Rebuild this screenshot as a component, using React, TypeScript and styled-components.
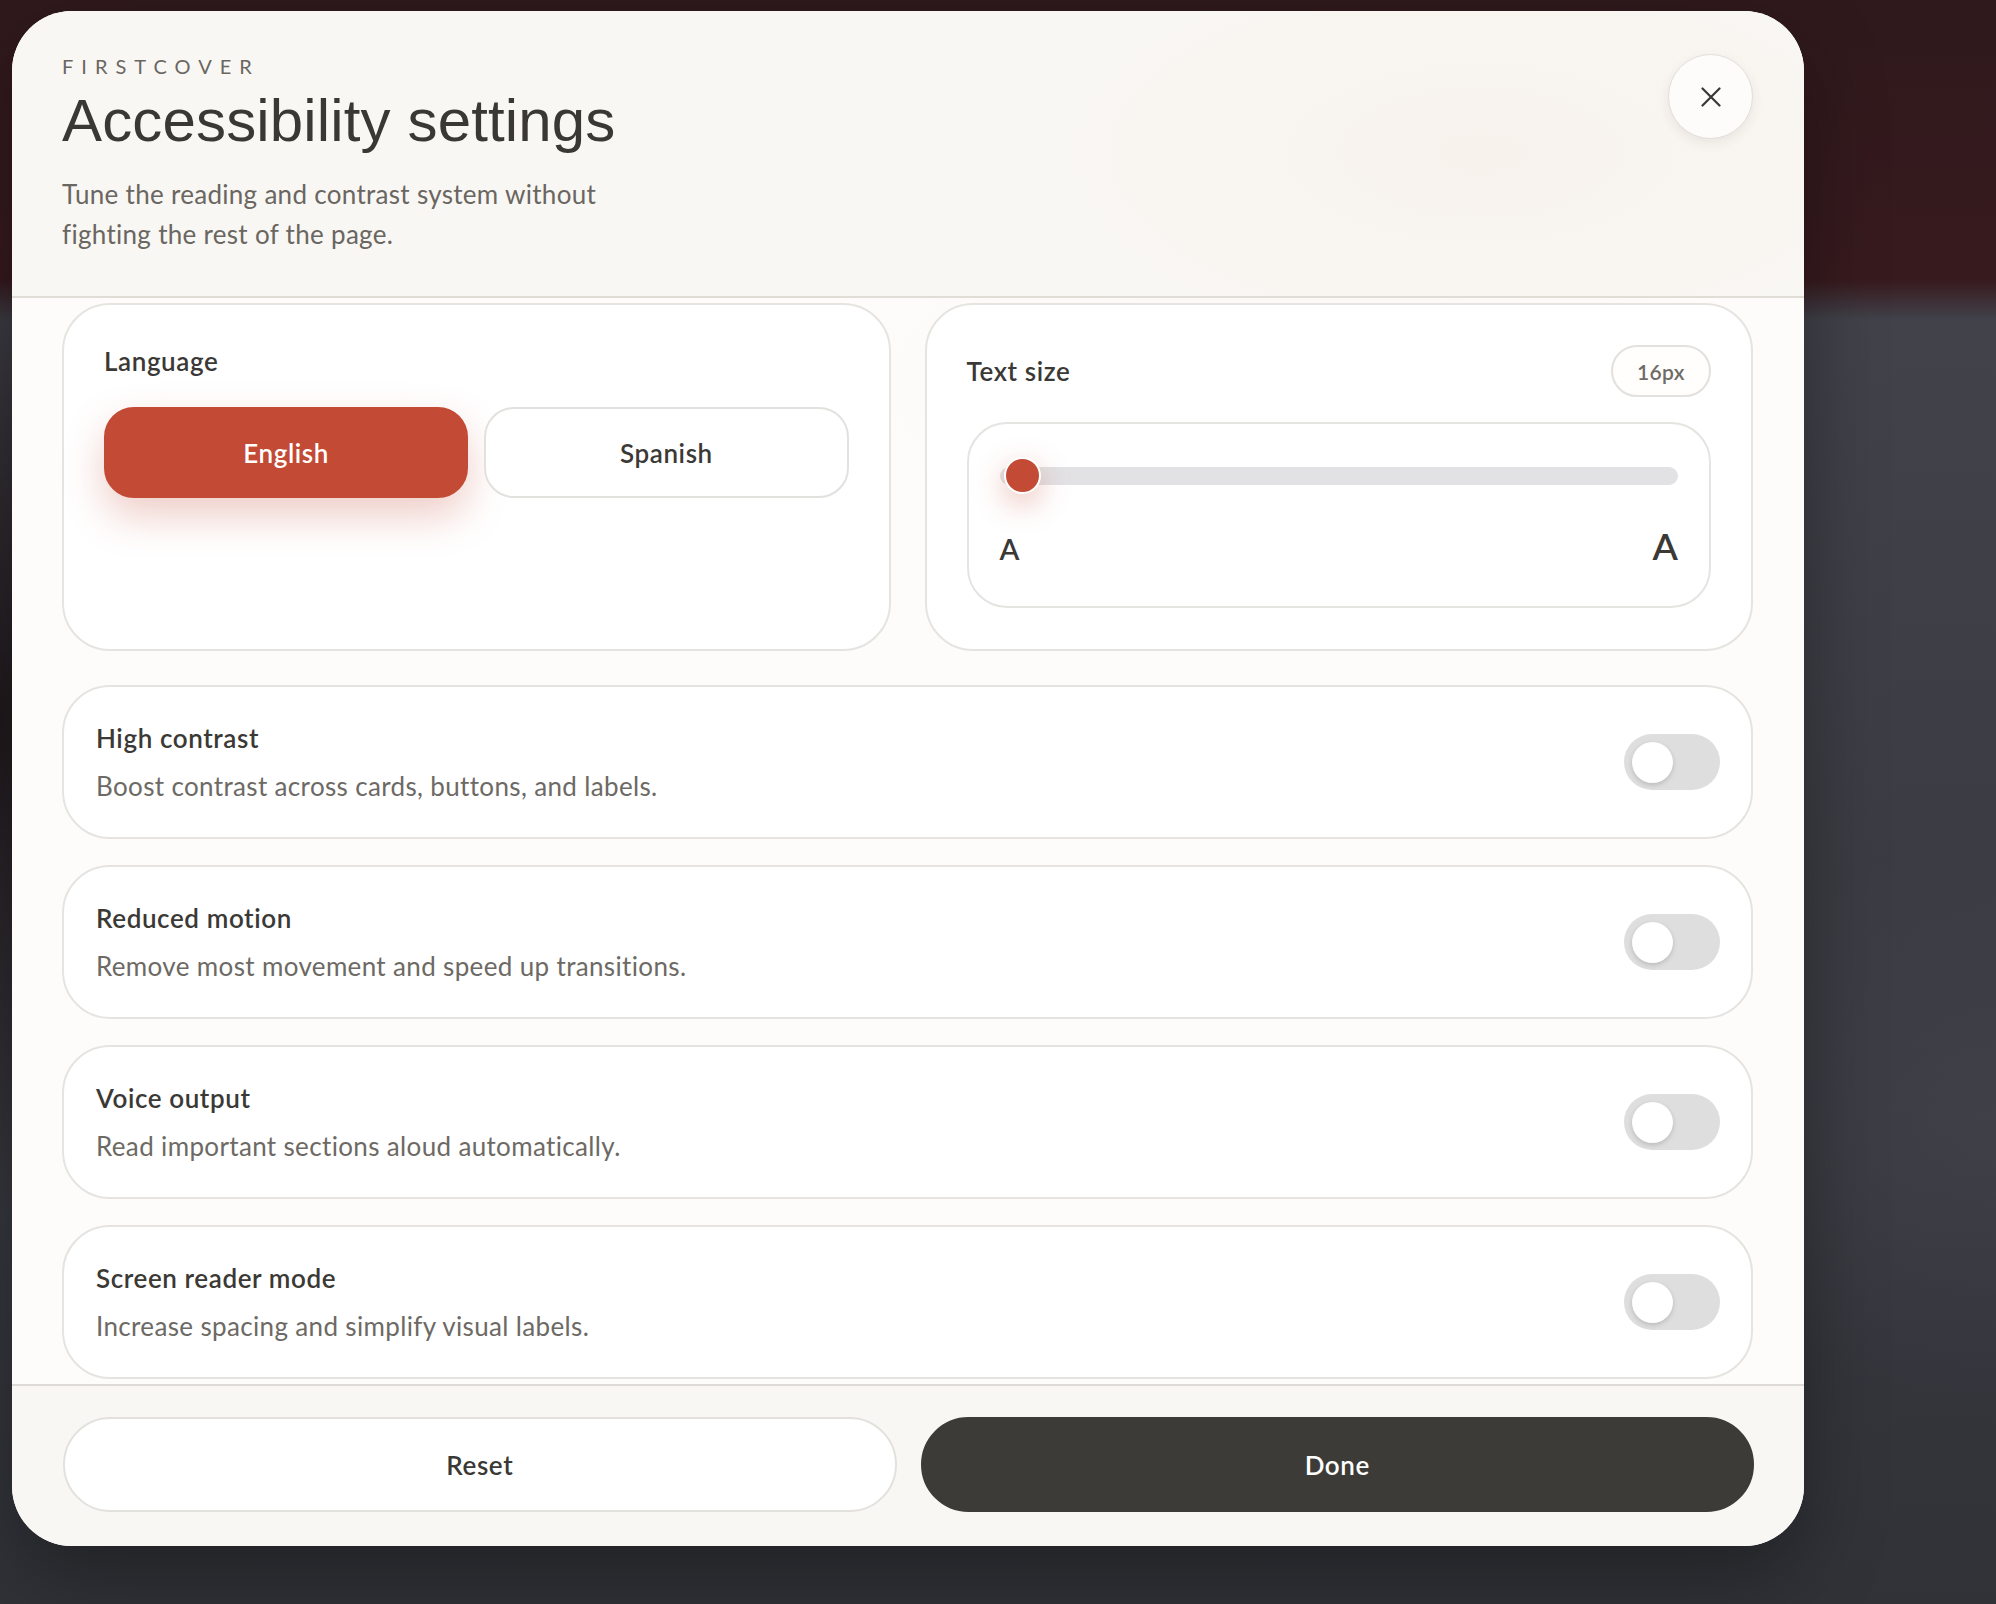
import React from "react";
import styled, { createGlobalStyle } from "styled-components";

const Global = createGlobalStyle`
  html, body { margin: 0; padding: 0; }
  body {
    font-family: Lato, "Liberation Sans", sans-serif;
    background: #35363c;
    -webkit-font-smoothing: antialiased;
  }
  * { box-sizing: border-box; }
  button { font-family: inherit; }
`;

const Page = styled.div`
  min-height: 100vh;
  padding: 11px 0 0 12px;
  background:
    radial-gradient(ellipse 260px 700px at 0% 45%, rgba(22, 12, 14, 0.75), transparent 70%),
    radial-gradient(ellipse 500px 400px at 100% 70%, rgba(70, 71, 80, 0.5), transparent 70%),
    linear-gradient(180deg, #2f191c 0px, #371a1e 280px, #41424a 320px, #3b3c43 900px, #313238 1604px);
`;

const Modal = styled.div`
  width: 1792px;
  border-radius: 60px;
  overflow: hidden;
  background: #fdfcfa;
  box-shadow: 0 30px 80px rgba(0, 0, 0, 0.35);
  display: flex;
  flex-direction: column;
`;

const Header = styled.header`
  display: flex;
  justify-content: space-between;
  align-items: flex-start;
  padding: 43px 51px 42px 50px;
  background:
    radial-gradient(ellipse 520px 240px at 82% 50%, rgba(245, 232, 225, 0.35), transparent 80%),
    #f9f7f3;
  border-bottom: 2px solid #e0dcd6;
`;

const HeaderText = styled.div`
  display: flex;
  flex-direction: column;
`;

const Eyebrow = styled.div`
  font-size: 20px;
  line-height: 24px;
  letter-spacing: 0.4em;
  color: #6a6661;
  text-transform: uppercase;
`;

const Title = styled.h1`
  margin: 11px 0 0;
  font-family: "Liberation Sans", Arial, sans-serif;
  font-size: 60px;
  line-height: 64px;
  letter-spacing: 0.15px;
  font-weight: 400;
  color: #3a3835;
`;

const Subtitle = styled.p`
  margin: 21px 0 0;
  max-width: 580px;
  font-size: 26px;
  line-height: 40px;
  letter-spacing: 0.3px;
  color: #6a6661;
`;

const CloseButton = styled.button`
  width: 85px;
  height: 85px;
  border-radius: 50%;
  border: 1.5px solid #e2dfda;
  background: #fdfcfb;
  box-shadow: 0 4px 12px rgba(60, 40, 30, 0.08);
  display: grid;
  place-items: center;
  padding: 0;
  cursor: pointer;
`;

const Body = styled.div`
  display: flex;
  flex-direction: column;
  gap: 34px;
  padding: 5px 51px 5px 50px;
  background:
    radial-gradient(ellipse 600px 260px at 72% 8%, rgba(246, 232, 226, 0.3), transparent 75%),
    #fdfcfa;
`;

const TopGrid = styled.div`
  display: grid;
  grid-template-columns: 1fr 1fr;
  gap: 34px;
`;

const Card = styled.section`
  border: 2px solid #e6e4e1;
  border-radius: 48px;
  background: #ffffff;
  padding: 40px 40px 41px;
  display: flex;
  flex-direction: column;
`;

const CardLabel = styled.div`
  font-size: 26px;
  line-height: 32px;
  font-weight: 600;
  letter-spacing: 0.6px;
  color: #3b3936;
`;

const LangGrid = styled.div`
  display: grid;
  grid-template-columns: 1fr 1fr;
  gap: 16px;
  margin-top: 30px;
`;

const LangButton = styled.button<{ $active?: boolean }>`
  height: 91px;
  border-radius: 30px;
  font-size: 26px;
  font-weight: 600;
  letter-spacing: 0.6px;
  cursor: pointer;
  border: 2px solid ${(p) => (p.$active ? "#c34a35" : "#e3e1de")};
  background: ${(p) => (p.$active ? "#c34a35" : "#ffffff")};
  color: ${(p) => (p.$active ? "#ffffff" : "#3b3936")};
  box-shadow: ${(p) => (p.$active ? "0 18px 40px rgba(195, 74, 53, 0.28)" : "none")};
`;

const SizeHeader = styled.div`
  display: flex;
  justify-content: space-between;
  align-items: center;
  height: 52px;
`;

const ValuePill = styled.div`
  height: 52px;
  padding: 0 24px;
  border-radius: 26px;
  border: 2px solid #e3e1de;
  background: #fffefd;
  display: flex;
  align-items: center;
  font-size: 21px;
  font-weight: 600;
  letter-spacing: 0.4px;
  color: #6f6b66;
`;

const SliderBox = styled.div`
  margin-top: 25px;
  border: 2px solid #e6e4e1;
  border-radius: 40px;
  padding: 33px 31px 42px;
  display: flex;
  flex-direction: column;
`;

const SliderArea = styled.div`
  position: relative;
  height: 37px;
  display: flex;
  align-items: center;
`;

const Track = styled.div`
  width: 100%;
  height: 18px;
  border-radius: 9px;
  background: #e2e2e4;
`;

const Thumb = styled.div`
  position: absolute;
  left: 4px;
  top: 0;
  width: 37px;
  height: 37px;
  border-radius: 50%;
  background: #c34a35;
  border: 2px solid #ffffff;
  box-shadow: 0 10px 30px rgba(195, 74, 53, 0.35);
`;

const ScaleRow = styled.div`
  margin-top: 33px;
  display: flex;
  justify-content: space-between;
  align-items: baseline;
  color: #3b3936;
  font-weight: 600;
`;

const ScaleLetter = styled.span<{ $size: number }>`
  font-size: ${(p) => p.$size}px;
  line-height: 1;
`;

const RowList = styled.div`
  display: flex;
  flex-direction: column;
  gap: 26px;
`;

const Row = styled.div`
  height: 154px;
  border: 2px solid #e6e4e1;
  border-radius: 48px;
  background: #ffffff;
  padding: 0 31px 0 32px;
  display: flex;
  align-items: center;
  justify-content: space-between;
`;

const RowText = styled.div`
  display: flex;
  flex-direction: column;
  gap: 18px;
`;

const RowTitle = styled.div`
  font-size: 26px;
  line-height: 30px;
  font-weight: 600;
  letter-spacing: 0.6px;
  color: #3b3936;
`;

const RowDesc = styled.div`
  font-size: 26px;
  line-height: 30px;
  letter-spacing: 0.35px;
  color: #6d6964;
`;

const Toggle = styled.div`
  width: 96px;
  height: 56px;
  border-radius: 28px;
  background: #dedede;
  display: flex;
  align-items: center;
  padding: 0 8px;
  flex-shrink: 0;
`;

const Knob = styled.div`
  width: 41px;
  height: 41px;
  border-radius: 50%;
  background: #ffffff;
  box-shadow: 0 2px 5px rgba(0, 0, 0, 0.16);
`;

const Footer = styled.footer`
  border-top: 2px solid #dedad5;
  background: #f9f7f3;
  padding: 31px 50px 34px 51px;
  display: grid;
  grid-template-columns: 1fr 1fr;
  gap: 24px;
`;

const FooterButton = styled.button<{ $primary?: boolean }>`
  height: 95px;
  border-radius: 48px;
  font-size: 26px;
  font-weight: 600;
  letter-spacing: 0.6px;
  cursor: pointer;
  border: 2px solid ${(p) => (p.$primary ? "#3d3b38" : "#e3e1de")};
  background: ${(p) => (p.$primary ? "#3d3b38" : "#ffffff")};
  color: ${(p) => (p.$primary ? "#ffffff" : "#3b3936")};
`;

const toggles = [
  { title: "High contrast", desc: "Boost contrast across cards, buttons, and labels." },
  { title: "Reduced motion", desc: "Remove most movement and speed up transitions." },
  { title: "Voice output", desc: "Read important sections aloud automatically." },
  { title: "Screen reader mode", desc: "Increase spacing and simplify visual labels." },
];

export default function App() {
  return (
    <>
      <Global />
      <Page>
        <Modal>
          <Header>
            <HeaderText>
              <Eyebrow>Firstcover</Eyebrow>
              <Title>Accessibility settings</Title>
              <Subtitle>Tune the reading and contrast system without fighting the rest of the page.</Subtitle>
            </HeaderText>
            <CloseButton aria-label="Close">
              <svg width="20" height="20" viewBox="0 0 20 20">
                <path d="M1.5 1.5 L18.5 18.5 M18.5 1.5 L1.5 18.5" stroke="#3a3835" strokeWidth="2.2" strokeLinecap="round" />
              </svg>
            </CloseButton>
          </Header>
          <Body>
            <TopGrid>
              <Card>
                <CardLabel>Language</CardLabel>
                <LangGrid>
                  <LangButton $active>English</LangButton>
                  <LangButton>Spanish</LangButton>
                </LangGrid>
              </Card>
              <Card>
                <SizeHeader>
                  <CardLabel>Text size</CardLabel>
                  <ValuePill>16px</ValuePill>
                </SizeHeader>
                <SliderBox>
                  <SliderArea>
                    <Track />
                    <Thumb />
                  </SliderArea>
                  <ScaleRow>
                    <ScaleLetter $size={29}>A</ScaleLetter>
                    <ScaleLetter $size={37}>A</ScaleLetter>
                  </ScaleRow>
                </SliderBox>
              </Card>
            </TopGrid>
            <RowList>
              {toggles.map((t) => (
                <Row key={t.title}>
                  <RowText>
                    <RowTitle>{t.title}</RowTitle>
                    <RowDesc>{t.desc}</RowDesc>
                  </RowText>
                  <Toggle>
                    <Knob />
                  </Toggle>
                </Row>
              ))}
            </RowList>
          </Body>
          <Footer>
            <FooterButton>Reset</FooterButton>
            <FooterButton $primary>Done</FooterButton>
          </Footer>
        </Modal>
      </Page>
    </>
  );
}
